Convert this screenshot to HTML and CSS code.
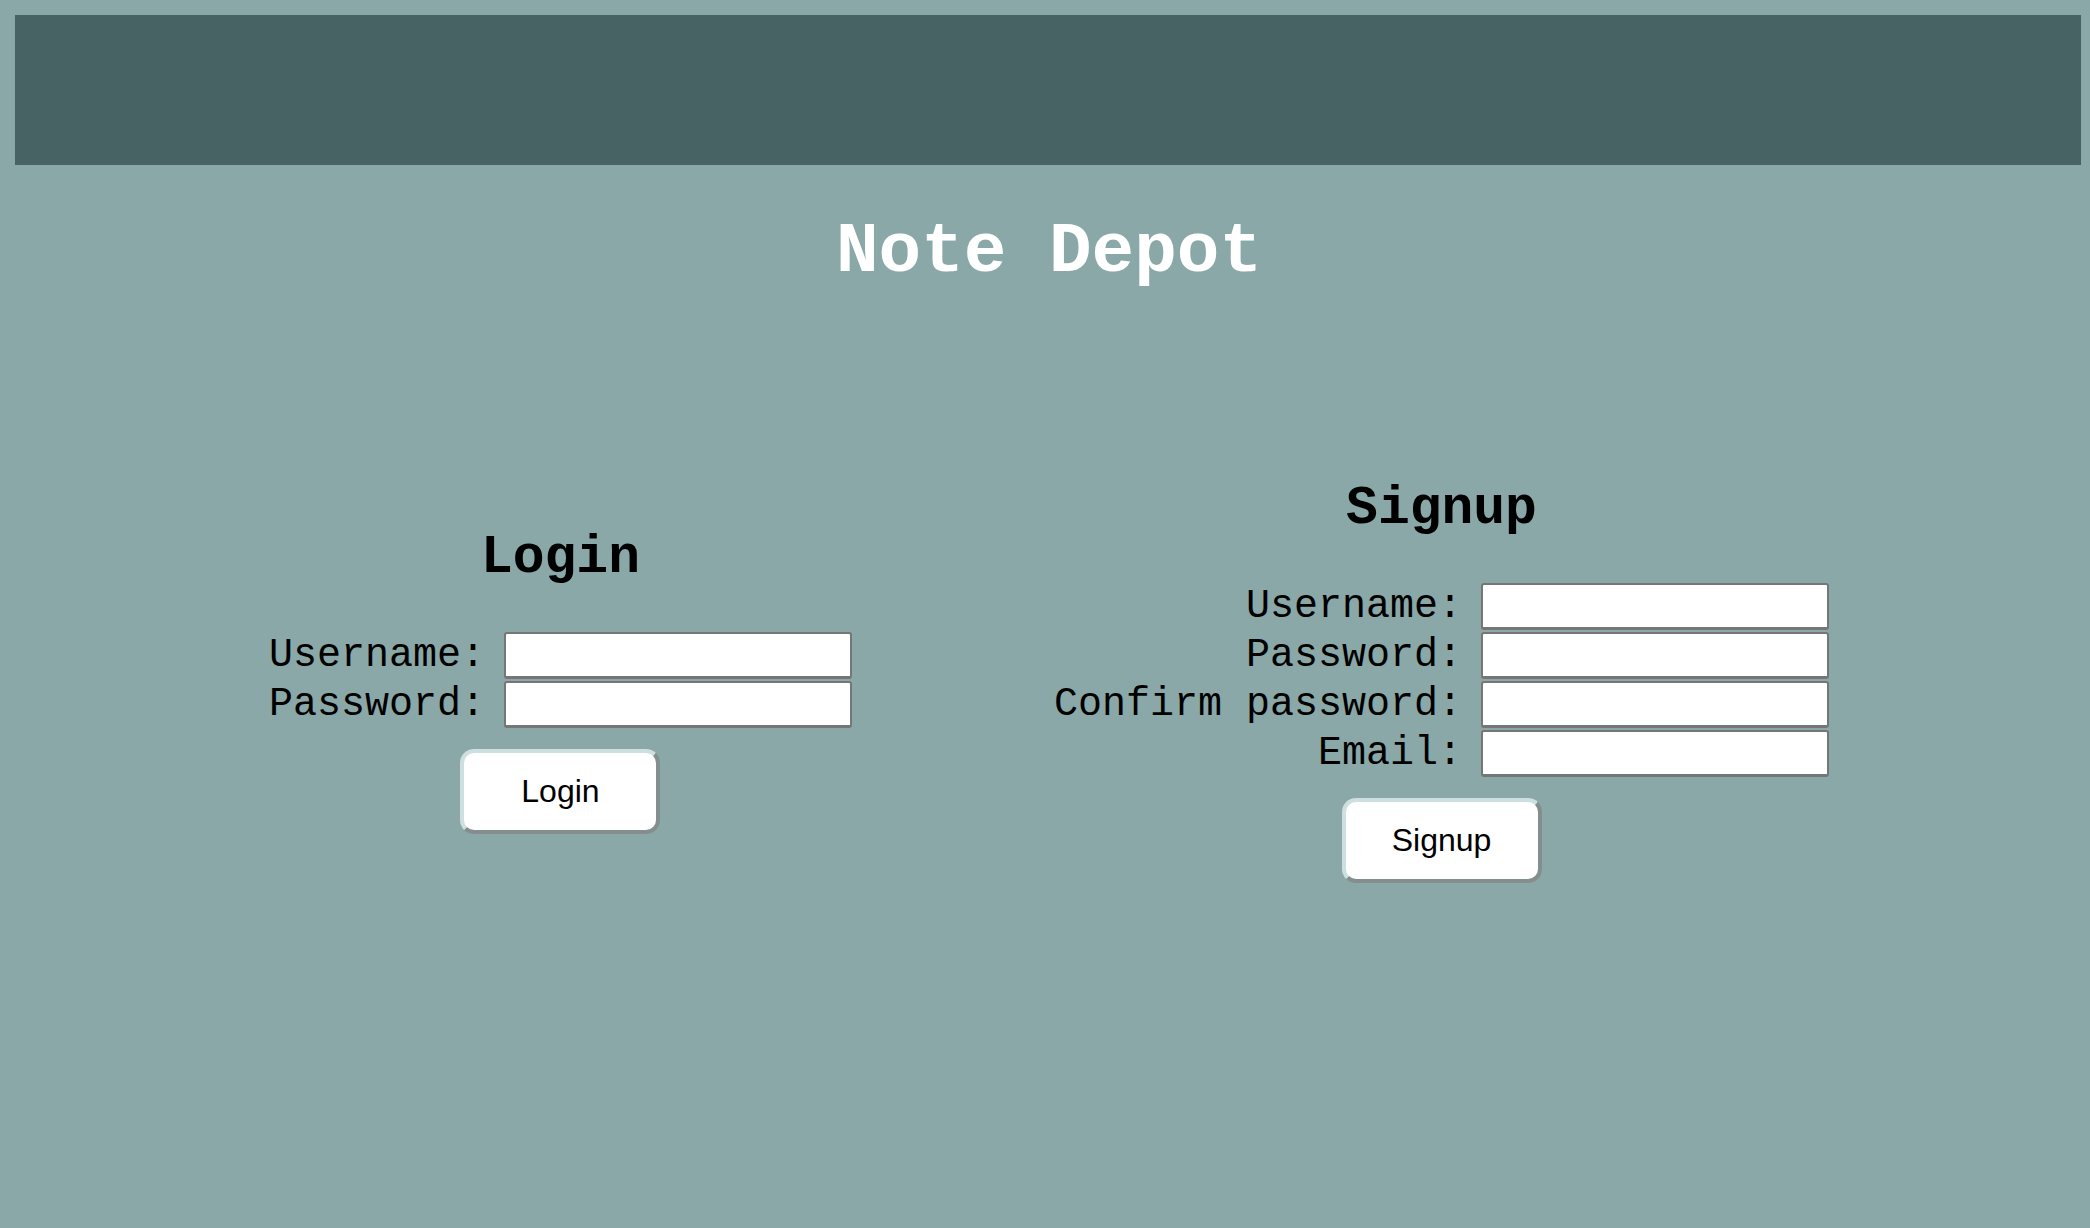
FILE: index.html
```html
<!DOCTYPE html>
<html lang="en">
<head>
<meta charset="utf-8">
<title>Note Depot</title>
<link rel="stylesheet" href="styles.css">
</head>
<body>
<header class="topbar"></header>
<h1 class="title">Note Depot</h1>
<main class="forms">
  <section class="panel">
    <h2 class="panel-title">Login</h2>
    <div class="fields">
      <label class="field-label" for="lu">Username:</label>
      <input class="field-input" id="lu" type="text">
      <label class="field-label" for="lp">Password:</label>
      <input class="field-input" id="lp" type="password">
    </div>
    <button class="btn" type="button">Login</button>
  </section>
  <section class="panel">
    <h2 class="panel-title">Signup</h2>
    <div class="fields">
      <label class="field-label" for="su">Username:</label>
      <input class="field-input" id="su" type="text">
      <label class="field-label" for="sp">Password:</label>
      <input class="field-input" id="sp" type="password">
      <label class="field-label" for="sc">Confirm password:</label>
      <input class="field-input" id="sc" type="password">
      <label class="field-label" for="se">Email:</label>
      <input class="field-input" id="se" type="text">
    </div>
    <button class="btn" type="button">Signup</button>
  </section>
</main>
</body>
</html>
```
FILE: styles.css
```css
html, body {
  margin: 0;
  padding: 0;
}
body {
  background: #8aa8a8;
  padding: 15px;
  min-height: 1228px;
  box-sizing: border-box;
  font-family: "Liberation Mono", "Courier New", monospace;
  color: #000;
}
.topbar {
  height: 150px;
  background: #486363;
  margin-right: -6px;
}
.title {
  margin: 47px 0 0;
  padding-left: 8px;
  font-size: 71px;
  line-height: 80px;
  font-weight: bold;
  color: #fff;
  text-align: center;
}
.forms {
  margin-top: 187px;
  padding-left: 8px;
  display: flex;
  justify-content: center;
  align-items: center;
  gap: 202px;
}
.panel {
  display: flex;
  flex-direction: column;
  align-items: center;
}
.panel-title {
  margin: 0 0 44px;
  font-size: 53px;
  line-height: 60px;
  font-weight: bold;
}
.fields {
  display: grid;
  grid-template-columns: auto 348px;
  column-gap: 19px;
  row-gap: 2px;
  align-items: center;
}
.field-label {
  font-size: 40px;
  line-height: 47px;
  text-align: right;
  white-space: pre;
}
.field-input {
  box-sizing: border-box;
  width: 348px;
  height: 47px;
  margin: 0;
  border: 2px solid #767676;
  border-bottom-width: 3px;
  border-radius: 3px;
  background: #fff;
}
.btn {
  margin-top: 21px;
  box-sizing: border-box;
  width: 200px;
  height: 85px;
  background: #fff;
  border: 4px solid;
  border-color: #cddfdf #858e8e #858e8e #cddfdf;
  border-radius: 14px;
  font-family: "Liberation Sans", Arial, sans-serif;
  font-size: 32px;
  color: #000;
  padding: 0;
}
```
